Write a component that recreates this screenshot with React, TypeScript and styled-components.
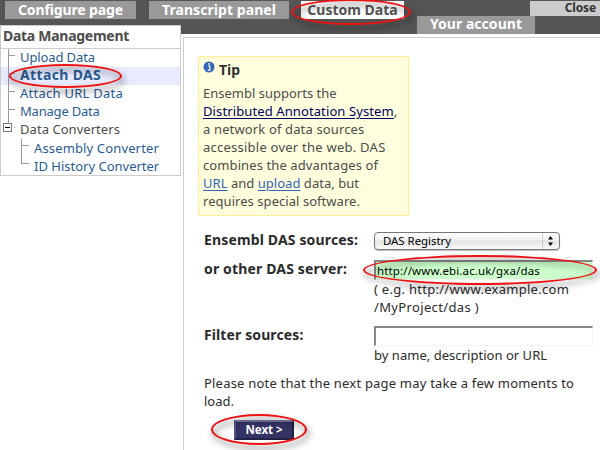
import React from "react";
import styled, { createGlobalStyle } from "styled-components";

const GlobalStyle = createGlobalStyle`
  * { box-sizing: border-box; }
  body {
    margin: 0;
    background: #fff;
    color: #4c4c4c;
    font: 13px/18px "Noto Sans", "Open Sans", sans-serif;
    overflow: hidden;
  }
`;

const Page = styled.div`
  position: relative;
  width: 600px;
  height: 450px;
  overflow: hidden;
`;

const Header = styled.header`
  display: flex;
  align-items: flex-start;
  height: 34px;
  padding: 1px 0 0 5px;
  background: #555;
`;

const Tab = styled.a<{ $width: number; $gap?: number; $active?: boolean; $track?: number; $line?: number }>`
  position: relative;
  flex: none;
  width: ${(p) => p.$width}px;
  height: 18px;
  margin-right: ${(p) => p.$gap ?? 0}px;
  text-align: center;
  font-size: 14px;
  font-weight: 700;
  line-height: ${(p) => p.$line ?? 17}px;
  letter-spacing: ${(p) => p.$track ?? 0}px;
  white-space: nowrap;
  color: ${(p) => (p.$active ? "#555" : "#fff")};
  background: ${(p) => (p.$active ? "#fff" : "#999")};
`;

const HeaderEnd = styled.div`
  display: flex;
  flex-direction: column;
  width: 183px;
`;

const Close = styled.a`
  align-self: flex-end;
  width: 70px;
  height: 15px;
  padding-right: 4px;
  text-align: right;
  font-size: 12px;
  font-weight: 700;
  line-height: 14px;
  letter-spacing: -0.15px;
  color: #333;
  background: #ccc;
`;

const Body = styled.div`
  display: flex;
  align-items: flex-start;
`;

const Sidebar = styled.nav`
  flex: none;
  position: relative;
  width: 181px;
  height: 151px;
  margin: -9px 2px 0 0;
  border: 1px solid #ccc;
  background: #fff;
`;

const SidebarTitle = styled.h2`
  height: 23px;
  margin: 0;
  padding-left: 2px;
  border-bottom: 1px solid #ccc;
  font-size: 14px;
  line-height: 20px;
  letter-spacing: -0.28px;
`;

const Node = styled.div<{ $child?: boolean; $current?: boolean; $plain?: boolean; $track?: number }>`
  display: flex;
  height: 18px;
  padding-left: ${(p) => (p.$child ? 20 : 6)}px;
  font-size: ${(p) => (p.$current ? 14 : 13)}px;
  font-weight: ${(p) => (p.$current ? 700 : 400)};
  line-height: 16px;
  letter-spacing: ${(p) => p.$track ?? 0}px;
  white-space: nowrap;
  color: ${(p) => (p.$plain ? "#4c4c4c" : "#2a5c94")};
  background: ${(p) => (p.$current ? "#e9ecff" : "transparent")};
`;

const SubTree = styled.div`
  padding-top: 1px;
`;

const Branch = styled.svg`
  flex: none;
  width: 13px;
  height: 18px;
  overflow: visible;
  fill: none;
  stroke: #999;
  shape-rendering: crispEdges;
`;

const Content = styled.main`
  flex: 1;
  height: 420px;
  margin-top: 3px;
  padding: 18px 0 0 14px;
  border: 1px solid #ccc;
  border-width: 1px 0 0 1px;
  color: #2b2b2b;
`;

const Tip = styled.section`
  width: 211px;
  height: 160px;
  padding: 4px 0 0 4px;
  border: 1px solid #fe9;
  background: #ffffdd;
  color: #4c4c4c;
`;

const TipTitle = styled.h3`
  display: flex;
  height: 23px;
  margin: 0;
  color: #333;
  font-size: 14px;
  line-height: 18px;
`;

const InfoIcon = styled.svg`
  width: 12px;
  height: 12px;
  margin-right: 4px;
`;

const TipHeading = styled.span`
  line-height: 18px;
`;

const Line = styled.div<{ $track?: number }>`
  height: 18px;
  white-space: nowrap;
  letter-spacing: ${(p) => p.$track ?? 0}px;
`;

const Link = styled.a<{ $visited?: boolean }>`
  color: ${(p) => (p.$visited ? "#000066" : "#3366bb")};
  text-decoration: underline;
  text-underline-offset: 2px;
`;

const Form = styled.form`
  padding-left: 6px;
`;

const FieldRow = styled.div<{ $top: number; $height: number }>`
  display: grid;
  grid-template-columns: 170px 1fr;
  height: ${(p) => p.$height}px;
  margin-top: ${(p) => p.$top}px;
`;

const Label = styled.label<{ $track: number }>`
  font-size: 14px;
  font-weight: 700;
  letter-spacing: ${(p) => p.$track}px;
  white-space: nowrap;
`;

const Control = styled.div`
  position: relative;
`;

const Select = styled.div`
  display: flex;
  justify-content: space-between;
  width: 186px;
  height: 18px;
  margin-top: 1px;
  padding-left: 8px;
  border: 1px solid #777;
  border-radius: 4px;
  box-shadow: 0 1px 1px #bbb;
  background: linear-gradient(#fff, #f0f0f0 45%, #e4e4e4 50%, #fafafa);
  color: #000;
  font-size: 11.4px;
  line-height: 15px;
`;

const Arrows = styled.svg`
  width: 17px;
  height: 16px;
`;

const Input = styled.div<{ $filled?: boolean }>`
  width: 219px;
  height: 20px;
  padding-left: 1px;
  border: solid;
  border-width: 2px 1px 1px 2px;
  border-color: #888 #f4f4f4 #f4f4f4 #888;
  background: ${(p) => (p.$filled ? "#ccffcc" : "#fff")};
  color: #000;
  font-size: 11.5px;
  line-height: 17px;
  letter-spacing: 0.14px;
  white-space: nowrap;
`;

const Note = styled.div`
  margin-top: 9px;
`;

const Button = styled.button`
  display: block;
  width: 60px;
  height: 20px;
  margin: 10px 0 0 30px;
  padding: 0;
  border: 2px solid;
  border-color: #77779f #222244 #222244 #55558a;
  background: #333366;
  color: #fff;
  font: 700 11.5px/16px "Noto Sans", sans-serif;
`;

const Ring = styled.span<{ $x: number; $y: number; $w: number; $h: number }>`
  position: absolute;
  z-index: 2;
  left: ${(p) => p.$x}px;
  top: ${(p) => p.$y}px;
  width: ${(p) => p.$w}px;
  height: ${(p) => p.$h}px;
  border: 2px solid #ee1111;
  border-radius: 50%;
  filter: drop-shadow(2px 4px 3px rgba(0, 0, 0, 0.65));
  pointer-events: none;
`;

const treeItems = [
  { label: "Upload Data", track: -0.11 },
  { label: "Attach DAS", track: 0.35, current: true },
  { label: "Attach URL Data", track: 0.25 },
  { label: "Manage Data", track: -0.2 },
];

export default function App() {
  return (
    <Page>
      <GlobalStyle />
      <Header>
        <Tab $width={131} $gap={13} $track={-0.13}>Configure page</Tab>
        <Tab $width={140} $gap={12} $track={0.06}>Transcript panel</Tab>
        <Tab $width={103} $gap={13} $active>Custom Data</Tab>
        <HeaderEnd>
          <Close>Close</Close>
          <Tab $width={118} $track={0.03} $line={16}>Your account</Tab>
        </HeaderEnd>
      </Header>
      <Body>
        <Sidebar>
          <SidebarTitle>Data Management</SidebarTitle>
          {treeItems.map((item) => (
            <Node key={item.label} $current={item.current} $track={item.track}>
              <Branch><path d="M1.5 0V18M1.5 6.5H8" /></Branch>
              {item.label}
            </Node>
          ))}
          <Node $plain $track={0.05}>
            <Branch>
              <path d="M1.5 0V2M7 6.5H8" />
              <rect x="-3.5" y="2.5" width="8" height="8" fill="#fff" stroke="#777" />
              <path d="M-2 6.5H3" stroke="#000" />
            </Branch>
            Data Converters
          </Node>
          <SubTree>
            <Node $child $track={0.14}>
              <Branch><path d="M0.5 -1V18M0.5 5.5H8" /></Branch>
              Assembly Converter
            </Node>
            <Node $child>
              <Branch><path d="M0.5 0V5.5H8" /></Branch>
              ID History Converter
            </Node>
          </SubTree>
        </Sidebar>
        <Content>
          <Tip>
            <TipTitle>
              <InfoIcon viewBox="0 0 12 12">
                <circle cx="6" cy="6" r="5.5" fill="#3366bb" />
                <path d="M5 5H6.8V9M4.7 9.2H7.7" fill="none" stroke="#fff" strokeWidth="1.2" />
                <circle cx="6.1" cy="2.9" r="0.9" fill="#fff" />
              </InfoIcon>
              <TipHeading>Tip</TipHeading>
            </TipTitle>
            <Line>Ensembl supports the</Line>
            <Line $track={0.11}><Link $visited>Distributed Annotation System</Link>,</Line>
            <Line $track={0.14}>a network of data sources</Line>
            <Line $track={0.24}>accessible over the web. DAS</Line>
            <Line $track={0.1}>combines the advantages of</Line>
            <Line $track={0.03}><Link>URL</Link> and <Link>upload</Link> data, but</Line>
            <Line $track={0.05}>requires special software.</Line>
          </Tip>
          <Form>
            <FieldRow $top={15} $height={29}>
              <Label $track={0.15}>Ensembl DAS sources:</Label>
              <Control>
                <Select>
                  DAS Registry
                  <Arrows viewBox="0 0 17 16">
                    <path d="M0.5 0V16" stroke="#ccc" />
                    <path d="M6 6.5L8.5 3L11 6.5ZM6 9.5L8.5 13L11 9.5Z" />
                  </Arrows>
                </Select>
              </Control>
            </FieldRow>
            <FieldRow $top={0} $height={66}>
              <Label $track={0.15}>or other DAS server:</Label>
              <Control>
                <Input $filled>http://www.ebi.ac.uk/gxa/das</Input>
                <Line $track={0.28}>( e.g. http://www.example.com</Line>
                <Line $track={0.35}>/MyProject/das )</Line>
              </Control>
            </FieldRow>
            <FieldRow $top={0} $height={39}>
              <Label $track={0.11}>Filter sources:</Label>
              <Control>
                <Input />
                <Line $track={0.03}>by name, description or URL</Line>
              </Control>
            </FieldRow>
            <Note>
              <Line $track={0.2}>Please note that the next page may take a few moments to</Line>
              <Line>load.</Line>
            </Note>
            <Button type="button">Next &gt;</Button>
          </Form>
        </Content>
      </Body>
      <Ring $x={291} $y={-1} $w={120} $h={26} />
      <Ring $x={9} $y={64} $w={113} $h={24} />
      <Ring $x={363} $y={255} $w={234} $h={30} />
      <Ring $x={211} $y={414} $w={96} $h={31} />
    </Page>
  );
}
